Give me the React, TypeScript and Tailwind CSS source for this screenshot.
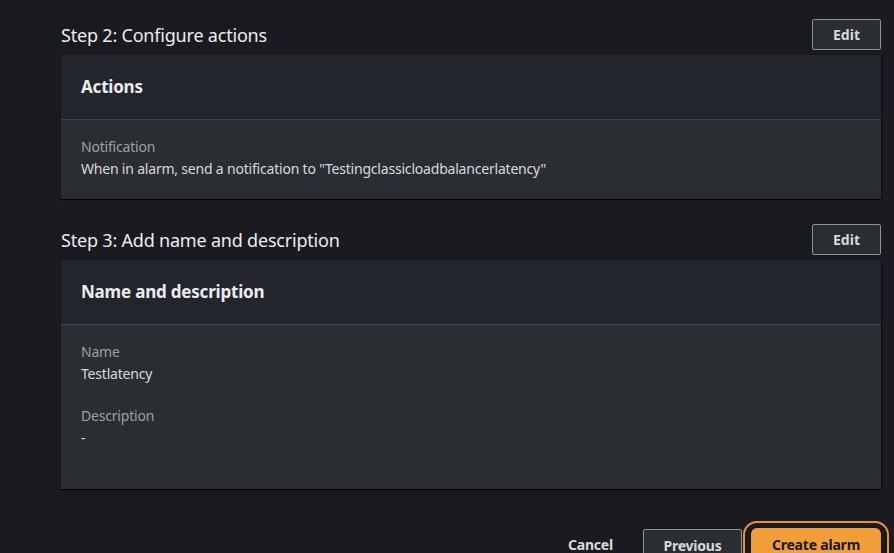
import React from "react";

interface Field {
  label: string;
  value: string;
}

interface Step {
  title: string;
  header: string;
  fields: Field[];
}

const steps: Step[] = [
  {
    title: "Step 2: Configure actions",
    header: "Actions",
    fields: [
      {
        label: "Notification",
        value: 'When in alarm, send a notification to "Testingclassicloadbalancerlatency"',
      },
    ],
  },
  {
    title: "Step 3: Add name and description",
    header: "Name and description",
    fields: [
      { label: "Name", value: "Testlatency" },
      { label: "Description", value: "-" },
    ],
  },
];

function StepSection({ step, last }: { step: Step; last: boolean }) {
  return (
    <section className="flex flex-col">
      <div className="flex items-center justify-between">
        <h2 className="text-[18px] leading-[24px] tracking-[-0.2px] text-[#eaeded]">{step.title}</h2>
        <button className="h-[31px] w-[69px] rounded-[2px] border border-[#879596] bg-[#2a2e33] text-[14px] font-bold text-[#d5dbdb]">
          Edit
        </button>
      </div>
      <div className="mt-[5px] bg-[#2a2e33] shadow-[0_1px_1px_0_#000000,1px_0_1px_0_#101114]">
        <div className="flex h-[65px] items-center border-b border-[#414750] bg-[#22252c] px-5">
          <h3 className="text-[17px] font-bold tracking-[-0.2px] text-[#eaeded]">{step.header}</h3>
        </div>
        <div className={`flex flex-col gap-[21px] px-5 pt-[17px] ${last ? "pb-[40px]" : "pb-[19px]"}`}>
          {step.fields.map((f) => (
            <div key={f.label} className="flex flex-col">
              <span className="text-[14px] leading-[20px] tracking-[-0.2px] text-[#95a5a6]">{f.label}</span>
              <span className="mt-[1px] text-[14px] leading-[22px] tracking-[-0.2px] text-[#d5dbdb]">{f.value}</span>
            </div>
          ))}
        </div>
      </div>
    </section>
  );
}

export default function App() {
  return (
    <div
      className="h-screen overflow-hidden bg-[#1a1b20] pl-[61px] pt-[19px]"
      style={{ fontFamily: '"Noto Sans", "Open Sans", sans-serif' }}
    >
      <div className="flex w-[820px] flex-col gap-[25px]">
        {steps.map((s, i) => (
          <StepSection key={s.title} step={s} last={i === steps.length - 1} />
        ))}
      </div>
      <div className="mt-[39px] flex w-[820px] items-start justify-end">
        <button className="mr-[30px] mt-[6px] text-[14px] font-bold tracking-[-0.2px] text-[#d5dbdb]">Cancel</button>
        <button className="mt-[1px] h-[32px] w-[99px] rounded-[2px] border border-[#879596] bg-[#2a2e33] text-[14px] font-bold tracking-[-0.2px] text-[#d5dbdb]">
          Previous
        </button>
        <button className="relative ml-[9px] h-[32px] w-[130px] rounded-[6px] bg-[#f19e38] text-[14px] font-bold tracking-[-0.2px] text-[#16191f]">
          <span className="pointer-events-none absolute -inset-x-[8px] -inset-y-[7px] rounded-[14px] border-2 border-[#ec9332]" />
          Create alarm
        </button>
      </div>
    </div>
  );
}
